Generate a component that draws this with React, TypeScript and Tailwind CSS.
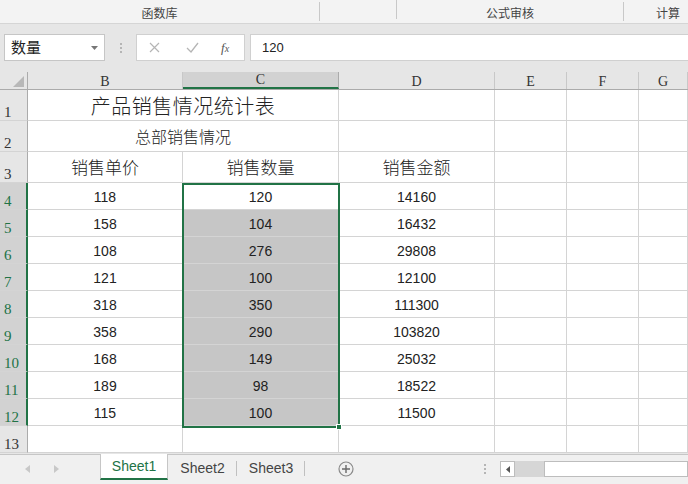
import React from 'react';

const cols = [
  { key: 'A', w: 'w-[155px]', label: 'B' },
  { key: 'C', w: 'w-[156px]', label: 'C' },
  { key: 'D', w: 'w-[156px]', label: 'D' },
  { key: 'E', w: 'w-[72px]', label: 'E' },
  { key: 'F', w: 'w-[72px]', label: 'F' },
  { key: 'G', w: 'w-[49px]', label: 'G' },
];

const data = [
  [118, 120, 14160],
  [158, 104, 16432],
  [108, 276, 29808],
  [121, 100, 12100],
  [318, 350, 111300],
  [358, 290, 103820],
  [168, 149, 25032],
  [189, 98, 18522],
  [115, 100, 11500],
];

const cjk = "font-['Noto_Sans_CJK_SC','Liberation_Sans',sans-serif]";
const serif = "font-['Liberation_Serif','Noto_Sans_CJK_SC',serif]";

const RowHead: React.FC<{ n: number; h: string; sel?: boolean }> = ({ n, h, sel }) => (
  <div
    className={`${h} w-[28px] shrink-0 flex items-end pl-[4px] pb-0 text-[15px] leading-none border-b border-[#d4d4d4] ${serif} ${
      sel ? 'bg-[#d2d2d2] text-[#217346] border-r-2 border-r-[#217346]' : 'bg-[#e6e6e6] text-[#333] border-r border-r-[#ababab]'
    }`}
  >
    {n}
  </div>
);

const Cell: React.FC<{ w: string; h: string; gray?: boolean; children?: React.ReactNode; className?: string }> = ({
  w,
  h,
  gray,
  children,
  className = '',
}) => (
  <div
    className={`${w} ${h} shrink-0 border-r border-b border-[#d4d4d4] flex items-end justify-center pb-[3px] ${
      gray ? 'bg-[#c6c6c6]' : 'bg-white'
    } ${className}`}
  >
    {children}
  </div>
);

export default function App() {
  return (
    <div className={`w-[688px] h-[484px] overflow-hidden bg-[#e6e6e6] relative ${cjk}`}>
      {/* ribbon group labels */}
      <div className="h-[24px] bg-[#f3f3f3] border-b border-[#d5d5d5] flex text-[12px] text-[#444]">
        <div className="w-[320px] flex items-center justify-center pt-[2px] border-r border-[#c8c8c8] h-[19px] mt-[2px]">函数库</div>
        <div className="w-[77px] border-r border-[#c8c8c8] h-[19px]" />
        <div className="w-[227px] flex items-center justify-center pt-[2px] border-r border-[#c8c8c8] h-[19px] mt-[2px]">公式审核</div>
        <div className="flex-1 flex items-center justify-center pt-[2px] pl-[24px]">计算</div>
      </div>

      {/* formula bar */}
      <div className="h-[48px] flex items-start pt-[10px] pl-[4px]">
        <div className="w-[101px] h-[27px] bg-white border border-[#c6c6c6] flex items-center justify-between pl-[6px] pr-[6px] text-[15px] text-[#222]">
          <span>数量</span>
          <svg width="7" height="4" viewBox="0 0 7 4"><path d="M0 0h7L3.5 4z" fill="#777" /></svg>
        </div>
        <div className="w-[31px] h-[27px] flex flex-col items-center justify-center gap-[2px]">
          <span className="w-[2px] h-[2px] bg-[#b5b5b5]" />
          <span className="w-[2px] h-[2px] bg-[#b5b5b5]" />
          <span className="w-[2px] h-[2px] bg-[#b5b5b5]" />
        </div>
        <div className="w-[109px] h-[27px] bg-white border border-[#d0d0d0] flex items-center text-[#b8b8b8]">
          <svg className="ml-[12px]" width="11" height="11" viewBox="0 0 11 11">
            <path d="M1 1l9 9M10 1l-9 9" stroke="#b5b5b5" strokeWidth="1.2" />
          </svg>
          <svg className="ml-[26px]" width="13" height="11" viewBox="0 0 13 11">
            <path d="M1 6l4 4 7-9" stroke="#b5b5b5" strokeWidth="1.3" fill="none" />
          </svg>
          <span className={`ml-[22px] italic text-[13px] text-[#555] ${serif}`}>
            f<span className="text-[10px]">x</span>
          </span>
        </div>
        <div className="ml-[5px] flex-1 h-[27px] bg-white border-y border-l border-[#d0d0d0] flex items-center pl-[11px] text-[13px] text-[#222] font-['Liberation_Sans',sans-serif]">
          120
        </div>
      </div>

      {/* sheet */}
      <div className="relative">
        {/* column headers */}
        <div className="flex h-[18px] bg-[#e6e6e6] border-b border-[#ababab]">
          <div className="w-[28px] shrink-0 border-r border-[#ababab] flex items-end justify-end pr-[3px] pb-[2px]">
            <svg width="11" height="11" viewBox="0 0 11 11"><path d="M11 0V11H0z" fill="#b8b8b8" /></svg>
          </div>
          {cols.map(c => (
            <div
              key={c.key}
              className={`${c.w} shrink-0 flex items-end justify-center pb-[0px] leading-none text-[14px] ${serif} ${
                c.label === 'C'
                  ? 'bg-[#d2d2d2] border-b-2 border-b-[#217346] border-r border-r-[#ababab] text-[#333]'
                  : 'border-r border-[#c8c8c8] text-[#333]'
              }`}
            >
              {c.label}
            </div>
          ))}
        </div>

        {/* row 1 */}
        <div className="flex">
          <RowHead n={1} h="h-[31px]" />
          <div className="w-[311px] h-[31px] shrink-0 bg-white border-r border-b border-[#d4d4d4] flex items-end justify-center pb-[4px] text-[20px] tracking-[0.5px] text-[#222] leading-none font-light">
            产品销售情况统计表
          </div>
          {cols.slice(2).map(c => (
            <Cell key={c.key} w={c.w} h="h-[31px]" />
          ))}
        </div>
        {/* row 2 */}
        <div className="flex">
          <RowHead n={2} h="h-[31px]" />
          <div className="w-[311px] h-[31px] shrink-0 bg-white border-r border-b border-[#d4d4d4] flex items-end justify-center pb-[7px] text-[16px] text-[#222] leading-none font-light">
            总部销售情况
          </div>
          {cols.slice(2).map(c => (
            <Cell key={c.key} w={c.w} h="h-[31px]" />
          ))}
        </div>
        {/* row 3 */}
        <div className="flex">
          <RowHead n={3} h="h-[31px]" />
          {['销售单价', '销售数量', '销售金额', '', '', ''].map((t, i) => (
            <Cell key={i} w={cols[i].w} h="h-[31px]" className="text-[17px] text-[#222] leading-none pb-[7px] font-light">
              {t}
            </Cell>
          ))}
        </div>
        {/* data rows */}
        {data.map((r, ri) => (
          <div key={ri} className="flex">
            <RowHead n={ri + 4} h="h-[27px]" sel />
            {cols.map((c, ci) => (
              <Cell
                key={c.key}
                w={c.w}
                h="h-[27px]"
                gray={ci === 1 && ri > 0}
                className="text-[14px] text-[#222] leading-none pb-[5px] font-['Liberation_Sans',sans-serif]"
              >
                {ci < 3 ? r[ci] : ''}
              </Cell>
            ))}
          </div>
        ))}
        {/* row 13 */}
        <div className="flex">
          <RowHead n={13} h="h-[27px]" />
          {cols.map(c => (
            <Cell key={c.key} w={c.w} h="h-[27px]" />
          ))}
        </div>

        {/* selection outline */}
        <div className="absolute left-[182px] top-[111px] w-[158px] h-[245px] border-2 border-[#217346] pointer-events-none">
          <div className="absolute -right-[4px] -bottom-[4px] w-[6px] h-[6px] bg-[#217346] border border-white" />
        </div>
      </div>

      {/* sheet tabs */}
      <div className="absolute left-0 right-0 bottom-0 h-[30px] bg-[#f0f0f0] border-t border-[#c6c6c6] flex items-start text-[14px] text-[#444] font-['Liberation_Sans','Noto_Sans',sans-serif]">
        <div className="w-[100px] h-[27px] flex items-center pl-[25px] gap-[24px]">
          <svg width="5" height="8" viewBox="0 0 5 8"><path d="M5 0v8L0 4z" fill="#c8c8c8" /></svg>
          <svg width="5" height="8" viewBox="0 0 5 8"><path d="M0 0v8l5-4z" fill="#c8c8c8" /></svg>
        </div>
        <div className="w-[68px] h-[26px] bg-white border-b-2 border-[#217346] text-[#217346] flex items-center justify-center -mt-[1px] border-x border-x-[#c6c6c6]">
          Sheet1
        </div>
        <div className="w-[69px] h-[27px] flex items-center justify-center relative">
          Sheet2
          <span className="absolute right-0 top-[6px] h-[15px] w-px bg-[#c0c0c0]" />
        </div>
        <div className="w-[68px] h-[27px] flex items-center justify-center relative">
          Sheet3
          <span className="absolute right-0 top-[6px] h-[15px] w-px bg-[#c0c0c0]" />
        </div>
        <div className="ml-[33px] h-[27px] flex items-center">
          <svg width="16" height="16" viewBox="0 0 16 16">
            <circle cx="8" cy="8" r="7" stroke="#8a8a8a" strokeWidth="1.2" fill="none" />
            <path d="M8 4v8M4 8h8" stroke="#6a6a6a" strokeWidth="1.4" />
          </svg>
        </div>
        <div className="ml-[130px] h-[27px] flex flex-col items-center justify-center gap-[2px]">
          <span className="w-[2px] h-[2px] bg-[#b5b5b5]" />
          <span className="w-[2px] h-[2px] bg-[#b5b5b5]" />
          <span className="w-[2px] h-[2px] bg-[#b5b5b5]" />
        </div>
        <div className="ml-[14px] mt-[6px] flex-1 h-[16px] flex">
          <div className="w-[15px] h-[16px] bg-white border border-[#bdbdbd] flex items-center justify-center">
            <svg width="4" height="7" viewBox="0 0 4 7"><path d="M4 0v7L0 3.5z" fill="#555" /></svg>
          </div>
          <div className="w-[29px] h-[16px] bg-[#d6d6d6]" />
          <div className="flex-1 h-[16px] bg-white border border-[#bdbdbd]" />
        </div>
      </div>
    </div>
  );
}
